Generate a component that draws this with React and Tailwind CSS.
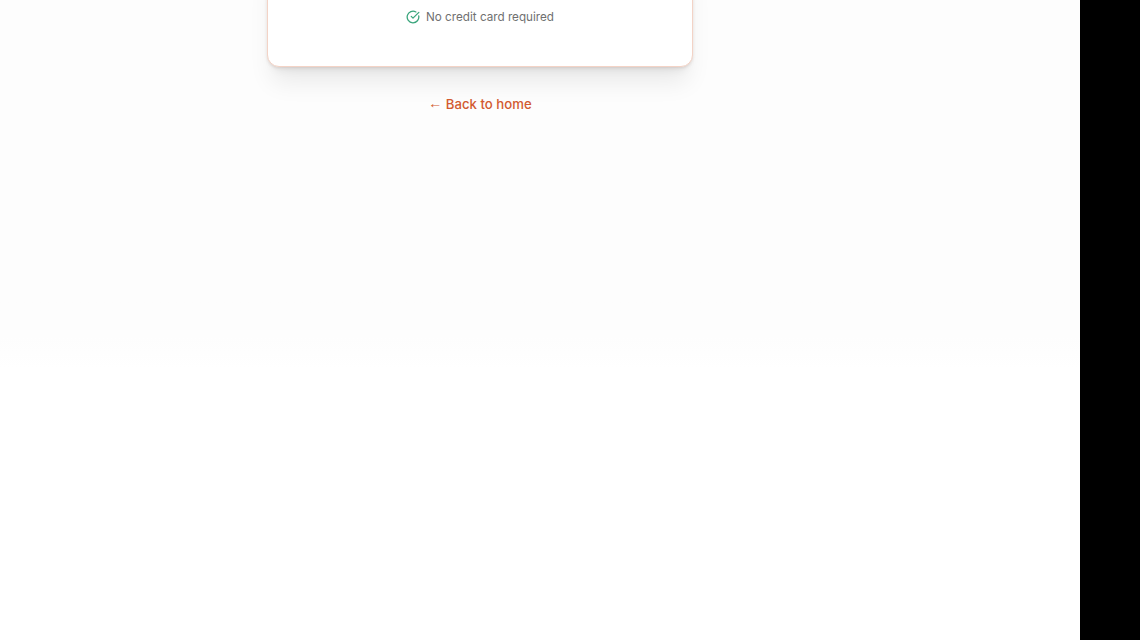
import React from 'react';
import { CircleCheckBig } from 'lucide-react';

const App = () => {
    return (
        <div className="flex h-[640px] w-[1140px] overflow-hidden bg-black" style={{ fontFamily: 'Inter, sans-serif' }}>
            <div className="w-[1080px] bg-gradient-to-b from-[#fdfdfd] from-[52.7%] to-white to-[57.7%]">
                <div className="flex w-[960px] flex-col items-center">
                    {/* Card, scrolled past the top of the window */}
                    <div className="-mt-10 flex h-[107px] w-[426px] items-start justify-center rounded-xl border border-[#f3d3c6] bg-white pt-[46px] shadow-[0_20px_25px_-5px_rgba(0,0,0,0.08),0_8px_10px_-6px_rgba(0,0,0,0.08),0_1px_3px_rgba(120,70,50,0.14)]">
                        <div className="flex items-center gap-[6px] text-[11.7px] leading-5 text-[#707070]">
                            <CircleCheckBig size={14} strokeWidth={2.2} className="text-[#3aa57c]" />
                            <span>No credit card required</span>
                        </div>
                    </div>

                    <a href="#" className="mt-[27px] text-[13.2px] leading-5 font-medium text-[#d25a30]">
                        <span className="relative -top-px font-['Liberation_Sans'] text-[14px] font-normal">←</span> Back to home
                    </a>
                </div>
            </div>
        </div>
    );
};

export default App;
